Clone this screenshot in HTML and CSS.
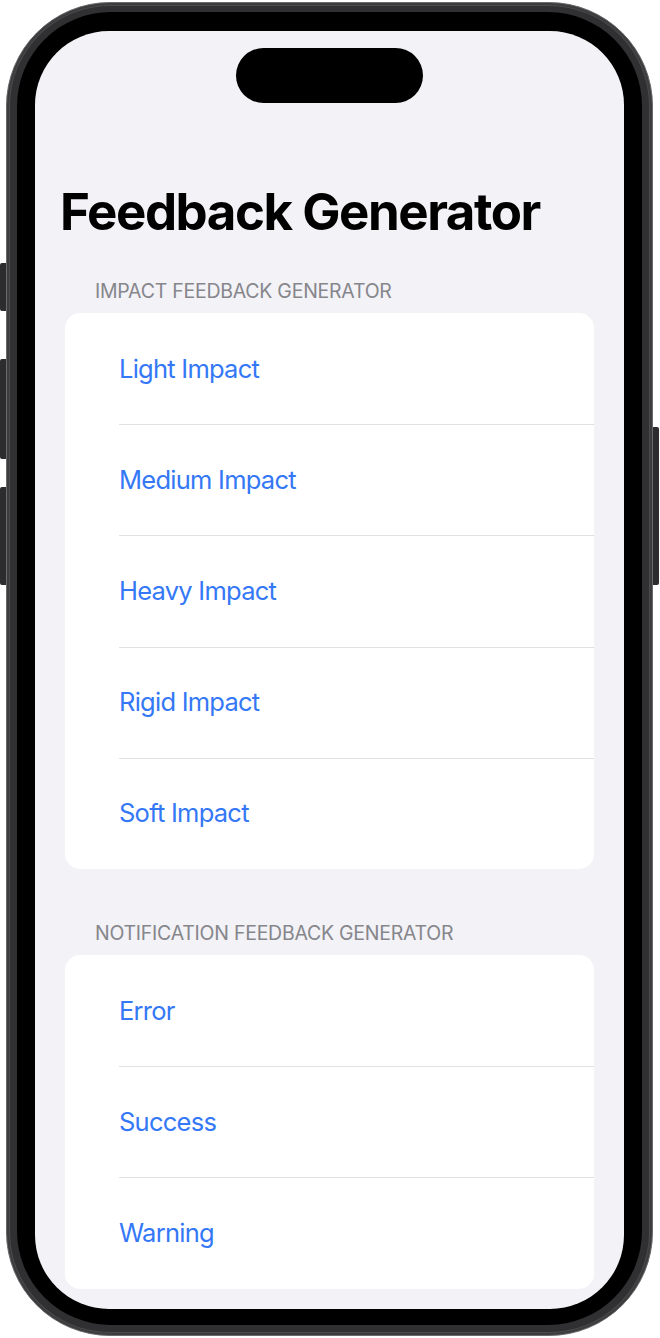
FILE: index.html
```html
<!DOCTYPE html>
<html lang="en">
<head>
<meta charset="utf-8">
<title>Feedback Generator</title>
<link rel="stylesheet" href="styles.css">
</head>
<body>
<div class="device">
  <div class="side-btn btn-action"></div>
  <div class="side-btn btn-vol-up"></div>
  <div class="side-btn btn-vol-down"></div>
  <div class="side-btn btn-power"></div>
  <div class="rim">
    <div class="bezel">
      <div class="screen">
        <div class="island"></div>
        <h1 class="title">Feedback Generator</h1>

        <section class="group">
          <div class="group-header">Impact Feedback Generator</div>
          <div class="card">
            <div class="row"><span class="row-label">Light Impact</span></div>
            <div class="row"><span class="row-label">Medium Impact</span></div>
            <div class="row"><span class="row-label">Heavy Impact</span></div>
            <div class="row"><span class="row-label">Rigid Impact</span></div>
            <div class="row"><span class="row-label">Soft Impact</span></div>
          </div>
        </section>

        <section class="group group-second">
          <div class="group-header">Notification Feedback Generator</div>
          <div class="card">
            <div class="row"><span class="row-label">Error</span></div>
            <div class="row"><span class="row-label">Success</span></div>
            <div class="row"><span class="row-label">Warning</span></div>
          </div>
        </section>
      </div>
    </div>
  </div>
</div>
</body>
</html>
```

FILE: styles.css
```css
* { box-sizing: border-box; }

html, body {
  margin: 0;
  padding: 0;
  background: #ffffff;
}

body {
  width: 660px;
  height: 1338px;
  overflow: hidden;
  font-family: Inter, "Noto Sans", "Liberation Sans", sans-serif;
}

.device {
  position: relative;
  width: 647px;
  height: 1334px;
  margin: 2px 0 0 6px;
}

.side-btn {
  position: absolute;
  width: 8px;
  background: #2c2c2e;
  border-radius: 2px;
}
.btn-action { left: -6px; top: 261px; height: 48px; }
.btn-vol-up { left: -6px; top: 357px; height: 100px; }
.btn-vol-down { left: -6px; top: 485px; height: 98px; }
.btn-power { right: -6px; top: 425px; height: 158px; }

.rim {
  position: relative;
  height: 100%;
  padding: 9px 10px 10px 10px;
  border-radius: 104px;
  background: #303032;
  border: 1px solid #6a6a6c;
  box-shadow: inset 0 0 0 2px #3c3c3e, inset 0 0 0 3px #4a4a4c;
}

.bezel {
  height: 100%;
  padding: 19px 18px 16px 18px;
  border-radius: 94px;
  background: #000000;
}

.screen {
  position: relative;
  height: 100%;
  overflow: hidden;
  border-radius: 74px;
  background: #f2f2f7;
  padding: 150px 30px 0 30px;
}

.island {
  position: absolute;
  top: 17px;
  left: 201px;
  width: 187px;
  height: 55px;
  border-radius: 28px;
  background: #000000;
}

.title {
  margin: 0 0 0 -5px;
  font-size: 51px;
  line-height: 61px;
  font-weight: 700;
  letter-spacing: -1.45px;
  color: #000000;
}

.group {
  margin-top: 37px;
}

.group-second {
  margin-top: 52px;
}

.group-header {
  padding-left: 30px;
  font-size: 19.5px;
  line-height: 24px;
  text-transform: uppercase;
  color: #86868b;
  letter-spacing: -0.25px;
  margin-bottom: 10px;
}

.card {
  background: #ffffff;
  border-radius: 15px;
  overflow: hidden;
}

.row {
  position: relative;
  height: 111.2px;
  display: flex;
  align-items: center;
  padding-left: 54px;
}

.row + .row::before {
  content: "";
  position: absolute;
  top: 0;
  left: 54px;
  right: 0;
  height: 1px;
  background: #e0e0e5;
}

.row-label {
  font-size: 25.5px;
  line-height: 30px;
  color: #3478f6;
  letter-spacing: -0.75px;
}
```
